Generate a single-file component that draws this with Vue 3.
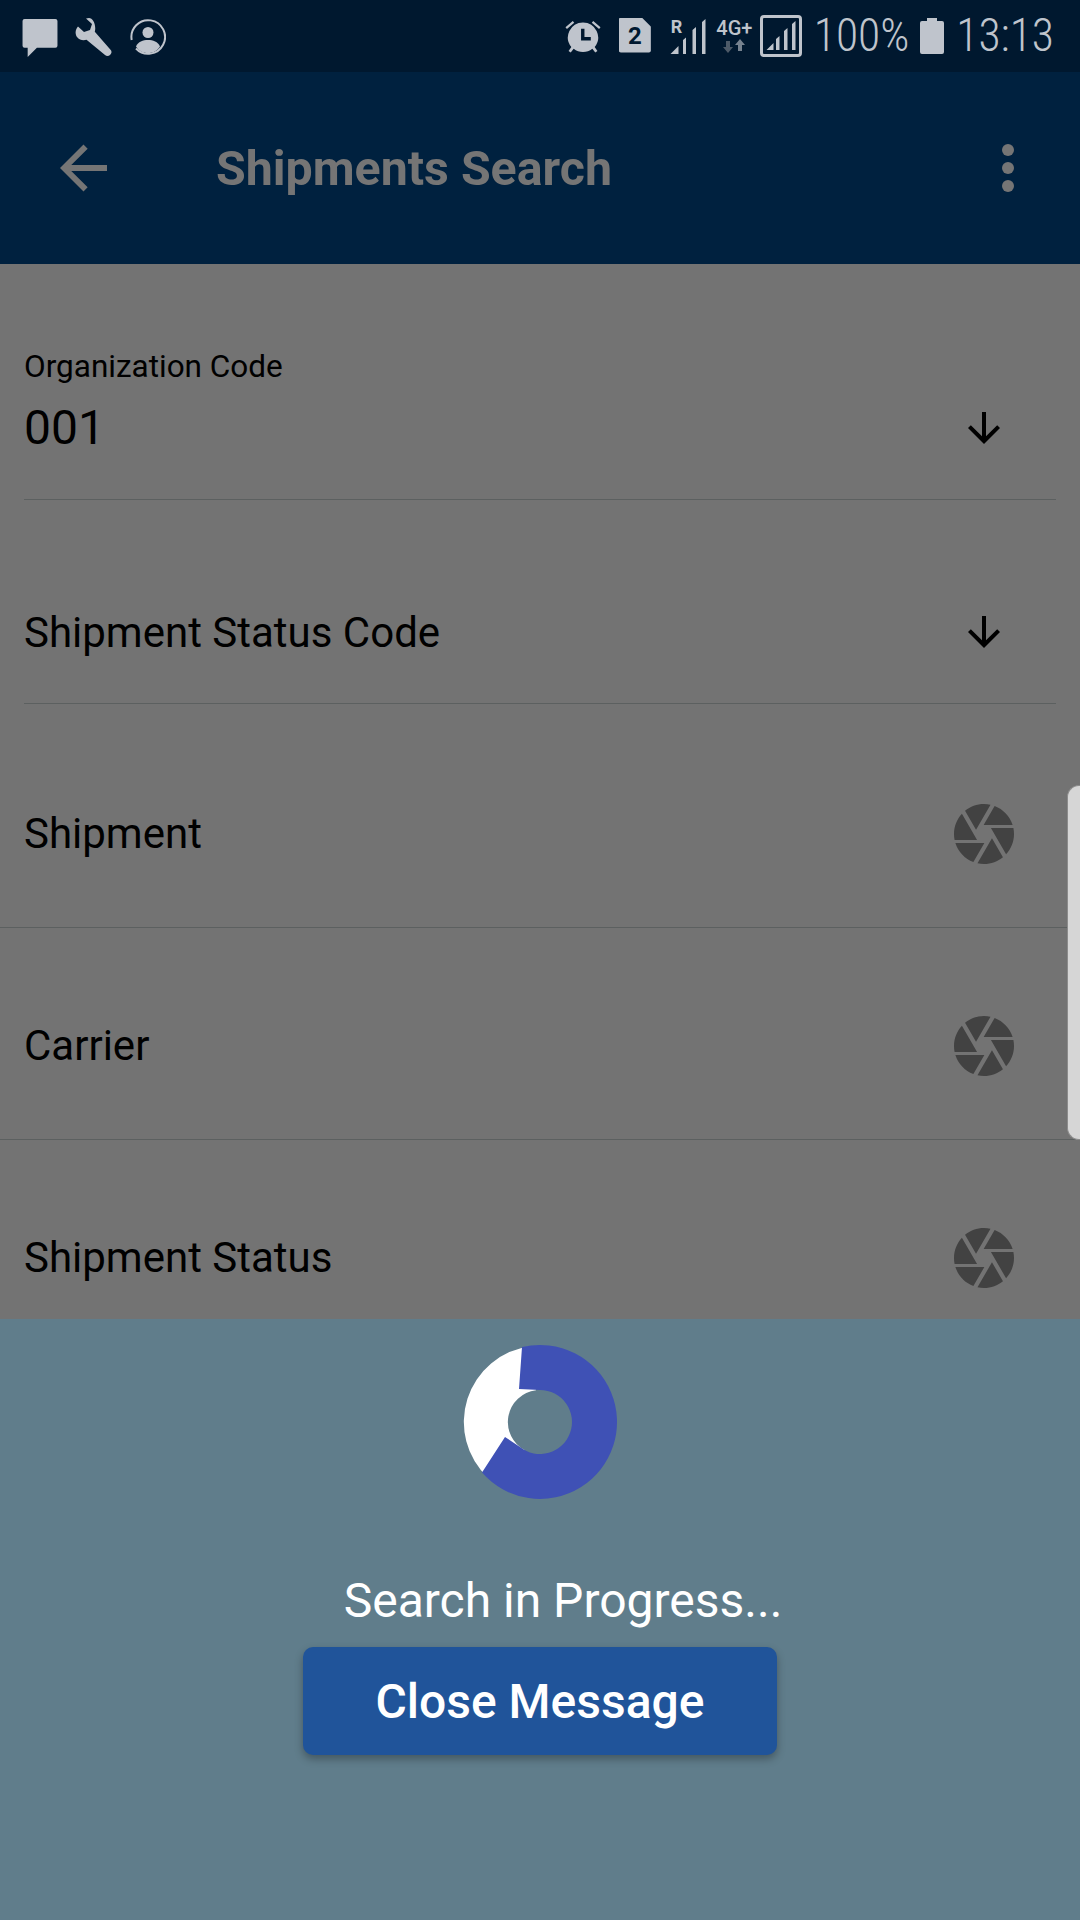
<script setup>
const rows = ['Shipment', 'Carrier', 'Shipment Status'];
const cameraPath =
  'M9.4 10.5l4.77-8.26C13.47 2.09 12.75 2 12 2c-2.4 0-4.6.85-6.32 2.25l3.66 6.35.06-.1zM21.54 9c-.92-2.92-3.15-5.26-6-6.34L11.88 9h9.66zm.26 1h-7.49l.29.5 4.76 8.25C21 16.97 22 14.61 22 12c0-.69-.07-1.35-.2-2zM8.54 12l-3.9-6.75C3.01 7.03 2 9.39 2 12c0 .69.07 1.35.2 2h7.49l-1.15-2zm-6.08 3c.92 2.92 3.15 5.26 6 6.34L12.12 15H2.46zm11.27 0l-3.9 6.76c.7.15 1.42.24 2.17.24 2.4 0 4.6-.85 6.32-2.25l-3.66-6.35-.93 1.6z';
const arrowDown = 'M20 12l-1.41-1.41L13 16.17V4h-2v12.17l-5.58-5.59L4 12l8 8 8-8z';
</script>

<template>
  <div class="screen">
    <div class="status-bar">
      <div class="status-left">
        <svg class="ico-msg" viewBox="0 0 34 37"><path d="M2 0h30a2 2 0 0 1 2 2v24a2 2 0 0 1-2 2H14L5 37V28H2a2 2 0 0 1-2-2V2a2 2 0 0 1 2-2z" /></svg>
        <svg class="ico-wrench" viewBox="0 0 38 38"><path d="M14 0c-1 0-2 .2-3 .6l6 5.400-2 6-6 2-6-5.500C.7 11-.5 15 2 19c2.500 3 6 4 9.500 2.800L30 37c1.500 1.200 3.500 1.200 5 0 1.800-1.500 2-3.800.5-5.300L19.800 13.800C21.500 7 18 0 14 0z" /></svg>
        <svg class="ico-user" viewBox="0 0 36 36">
          <path class="ring" d="M1.700 21.500A16.800 16.800 0 1 1 6 30" />
          <circle cx="18" cy="14" r="5.500" />
          <path d="M6 28c2-5 7-6.500 12-6.500s10 1.500 12 6.500c-3 4.500-7 6.500-12 6.500S9 32.500 6 28z" />
        </svg>
      </div>
      <div class="status-right">
        <svg class="ico-alarm" viewBox="0 0 36 38">
          <path d="M18 4.500a15.500 15.500 0 0 0-12 25.300l-2.800 4.200 2.200 1.500 3-4a15.500 15.500 0 0 0 19.200 0l3 4 2.200-1.500-2.800-4.200A15.500 15.500 0 0 0 18 4.500z" />
          <path class="cut" d="M16 11h3.500v8.500H26V23H16z" />
          <path d="M7.500 3 0 9.500l1.500 1.800L9 4.800zM28.500 3 36 9.500l-1.500 1.800L27 4.800z" />
        </svg>
        <div class="sim"><span>2</span></div>
        <div class="sig-wrap">
          <span class="sig-r">R</span>
          <svg class="ico-sig" viewBox="0 0 35 35"><path d="M0 35 8 27v8zM12.500 35V21l3-2.500V35zM22 35V11l3.500-3v27zM31.500 35V3L35 0v35z" /></svg>
        </div>
        <div class="net">
          <span class="net-label">4G+</span>
          <svg class="ico-updown" viewBox="0 0 22 14">
            <path class="dim" d="M3 2h4v6h3l-5 6-5-6h3z" />
            <path class="bright" d="M17 0l5 6h-3v6h-4V6h-3z" />
          </svg>
        </div>
        <div class="sig-box">
          <svg viewBox="0 0 30 29"><path d="M0 29 7 22v7zM9.500 29V18l3.500-3v14zM17.500 29V10l3.500-3v22zM25.500 29V3L29 0v29z" /></svg>
        </div>
        <span class="status-text pct">100%</span>
        <svg class="ico-batt" viewBox="0 0 24 36"><path d="M7 0h10v3h5a2 2 0 0 1 2 2v29a2 2 0 0 1-2 2H2a2 2 0 0 1-2-2V5a2 2 0 0 1 2-2h5z" /></svg>
        <span class="status-text clock">13:13</span>
      </div>
    </div>

    <header class="app-bar">
      <svg class="back" viewBox="4 4 16 16"><path d="M20 11H7.830l5.590-5.590L12 4l-8 8 8 8 1.410-1.410L7.830 13H20v-2z" /></svg>
      <h1 class="title">Shipments Search</h1>
      <div class="more"><i></i><i></i><i></i></div>
    </header>

    <main class="content">
      <div class="select-field filled">
        <div class="select-text">
          <label>Organization Code</label>
          <span class="value">001</span>
        </div>
        <svg class="arrow" viewBox="0 0 24 24"><path :d="arrowDown" /></svg>
      </div>
      <div class="select-field">
        <div class="select-text">
          <span class="value">Shipment Status Code</span>
        </div>
        <svg class="arrow" viewBox="0 0 24 24"><path :d="arrowDown" /></svg>
      </div>
      <div v-for="row in rows" :key="row" class="scan-row">
        <span class="value">{{ row }}</span>
        <svg class="camera" viewBox="0 0 24 24"><path :d="cameraPath" /></svg>
      </div>
      <div class="edge-handle"></div>
    </main>

    <section class="progress-panel">
      <svg class="spinner" viewBox="0 0 160 160">
        <path fill="#fff" d="M70 4.200A76.500 76.500 0 0 0 28 135.800L65 108.300A32 32 0 0 1 76 48.200Z" />
        <path fill="#3f51b5" d="M62 5.100A77 77 0 1 1 22 130.600L45 95L60 105A32 32 0 1 0 80 48L59 47Z" />
      </svg>
      <p class="progress-text">Search in Progress...</p>
      <button class="close-btn">Close Message</button>
    </section>
  </div>
</template>

<style>
html, body {
  margin: 0;
  background: #737373;
}
</style>

<style scoped>
.screen {
  width: 1080px;
  height: 1920px;
  display: flex;
  flex-direction: column;
  overflow: hidden;
  font-family: Roboto, "Noto Sans", sans-serif;
  background: #737373;
}

.status-bar {
  height: 72px;
  flex: none;
  display: flex;
  justify-content: space-between;
  align-items: center;
  background: #00182f;
  padding: 0 26px 0 22px;
  box-sizing: border-box;
  fill: #bfc4cc;
  color: #bfc4cc;
}
.status-left,
.status-right {
  display: flex;
  align-items: center;
}
.ico-msg { width: 36px; height: 38px; margin-top: 3px; }
.ico-wrench { width: 38px; height: 40px; margin-left: 17px; margin-top: 1px; }
.ico-user { width: 36px; height: 37px; margin-left: 17px; }
.ring { fill: none; stroke: #bfc4cc; stroke-width: 2; }
.ico-alarm { width: 36px; height: 37px; }
.cut { fill: #00182f; }
.sim {
  width: 32px;
  height: 35px;
  margin-left: 18px;
  margin-top: -2px;
  background: #bfc4cc;
  clip-path: path('M2 0H23L32 9V33a2 2 0 0 1-2 2H2a2 2 0 0 1-2-2V2a2 2 0 0 1 2-2z');
  color: #00182f;
  font-size: 24px;
  font-weight: 700;
  line-height: 36px;
  text-align: center;
}
.sig-wrap {
  position: relative;
  width: 36px;
  height: 35px;
  margin-left: 19px;
}
.sig-r {
  position: absolute;
  left: 1px;
  top: -1px;
  font-size: 18px;
  font-weight: 700;
  line-height: 18px;
}
.ico-sig { position: absolute; left: 0; top: 0; width: 36px; height: 35px; }
.net {
  display: flex;
  flex-direction: column;
  align-items: center;
  width: 37px;
  margin-left: 10px;
}
.net-label {
  font-size: 20px;
  font-weight: 500;
  line-height: 19px;
  white-space: nowrap;
}
.ico-updown { width: 22px; height: 14px; margin-top: 1px; }
.dim { fill: #4d5a68; }
.bright { fill: #76828f; }
.sig-box {
  width: 42px;
  height: 42px;
  margin-left: 7px;
  border: 3px solid #bfc4cc;
  border-radius: 4px;
  box-sizing: border-box;
  padding: 3px 2px 4px 3px;
}
.sig-box svg { display: block; width: 100%; height: 100%; }
.status-text {
  font-size: 45.500px;
  font-weight: 340;
  font-stretch: 75%;
  line-height: 46px;
  display: inline-block;
  white-space: nowrap;
}
.pct { margin-left: 12px; }
.ico-batt { width: 24px; height: 36px; margin-left: 11px; }
.clock { margin-left: 12px; }

.app-bar {
  height: 192px;
  flex: none;
  display: flex;
  align-items: center;
  background: #00213f;
  position: relative;
  z-index: 1;
}
.back {
  width: 47px;
  height: 48px;
  margin-left: 60px;
  fill: #757575;
}
.title {
  margin: 0 0 0 109px;
  font-size: 48.300px;
  font-weight: 700;
  color: #757575;
  flex: 1;
}
.more {
  display: flex;
  flex-direction: column;
  gap: 6px;
  margin-right: 66px;
}
.more i {
  display: block;
  width: 12px;
  height: 12px;
  border-radius: 50%;
  background: #757575;
}

.content {
  flex: 1;
  min-height: 0;
  position: relative;
  overflow: hidden;
  color: #000;
}
.select-field {
  height: 204px;
  margin: 0 24px;
  box-sizing: border-box;
  border-bottom: 1px solid #5c6060;
  display: flex;
  justify-content: space-between;
  align-items: flex-end;
  padding-bottom: 44px;
}
.select-field.filled {
  height: 236px;
}
.select-text {
  display: flex;
  flex-direction: column;
}
.select-text label {
  font-size: 31.500px;
  line-height: 34px;
  margin-bottom: 19px;
}
.value {
  font-size: 42px;
  line-height: 50px;
  position: relative;
  top: -1px;
}
.filled .value { font-size: 48px; top: -2px; }
.filled label { position: relative; top: -2px; }
.arrow {
  width: 48px;
  height: 48px;
  margin-right: 48px;
  margin-bottom: 3px;
}
.scan-row {
  height: 212px;
  box-sizing: border-box;
  border-bottom: 1px solid #5c6060;
  padding: 0 60px 57px 24px;
  display: flex;
  justify-content: space-between;
  align-items: flex-end;
}
.select-field + .scan-row { height: 224px; }
.scan-row .value { line-height: 72px; top: 0; }
.camera {
  width: 72px;
  height: 72px;
  fill: #424242;
}
.edge-handle {
  position: absolute;
  right: 0;
  top: 521px;
  width: 13px;
  height: 355px;
  background: #d6d6d6;
  border: 1px solid #8c8c8c;
  border-right: none;
  border-radius: 12px 0 0 12px;
  box-sizing: border-box;
}

.progress-panel {
  height: 601px;
  flex: none;
  background: #607d8b;
  display: flex;
  flex-direction: column;
  align-items: center;
  position: relative;
}
.spinner {
  width: 160px;
  height: 160px;
  margin-top: 23px;
}
.progress-text {
  margin: 71px 0 0;
  padding-left: 46px;
  font-size: 48px;
  line-height: 56px;
  color: #fff;
}
.close-btn {
  width: 474px;
  height: 108px;
  margin-top: 18px;
  border: none;
  border-radius: 10px;
  background: #20549a;
  color: #fff;
  font-family: inherit;
  font-size: 48px;
  font-weight: 500;
  box-shadow: 0 4px 8px rgba(0, 0, 0, 0.3);
}
</style>
